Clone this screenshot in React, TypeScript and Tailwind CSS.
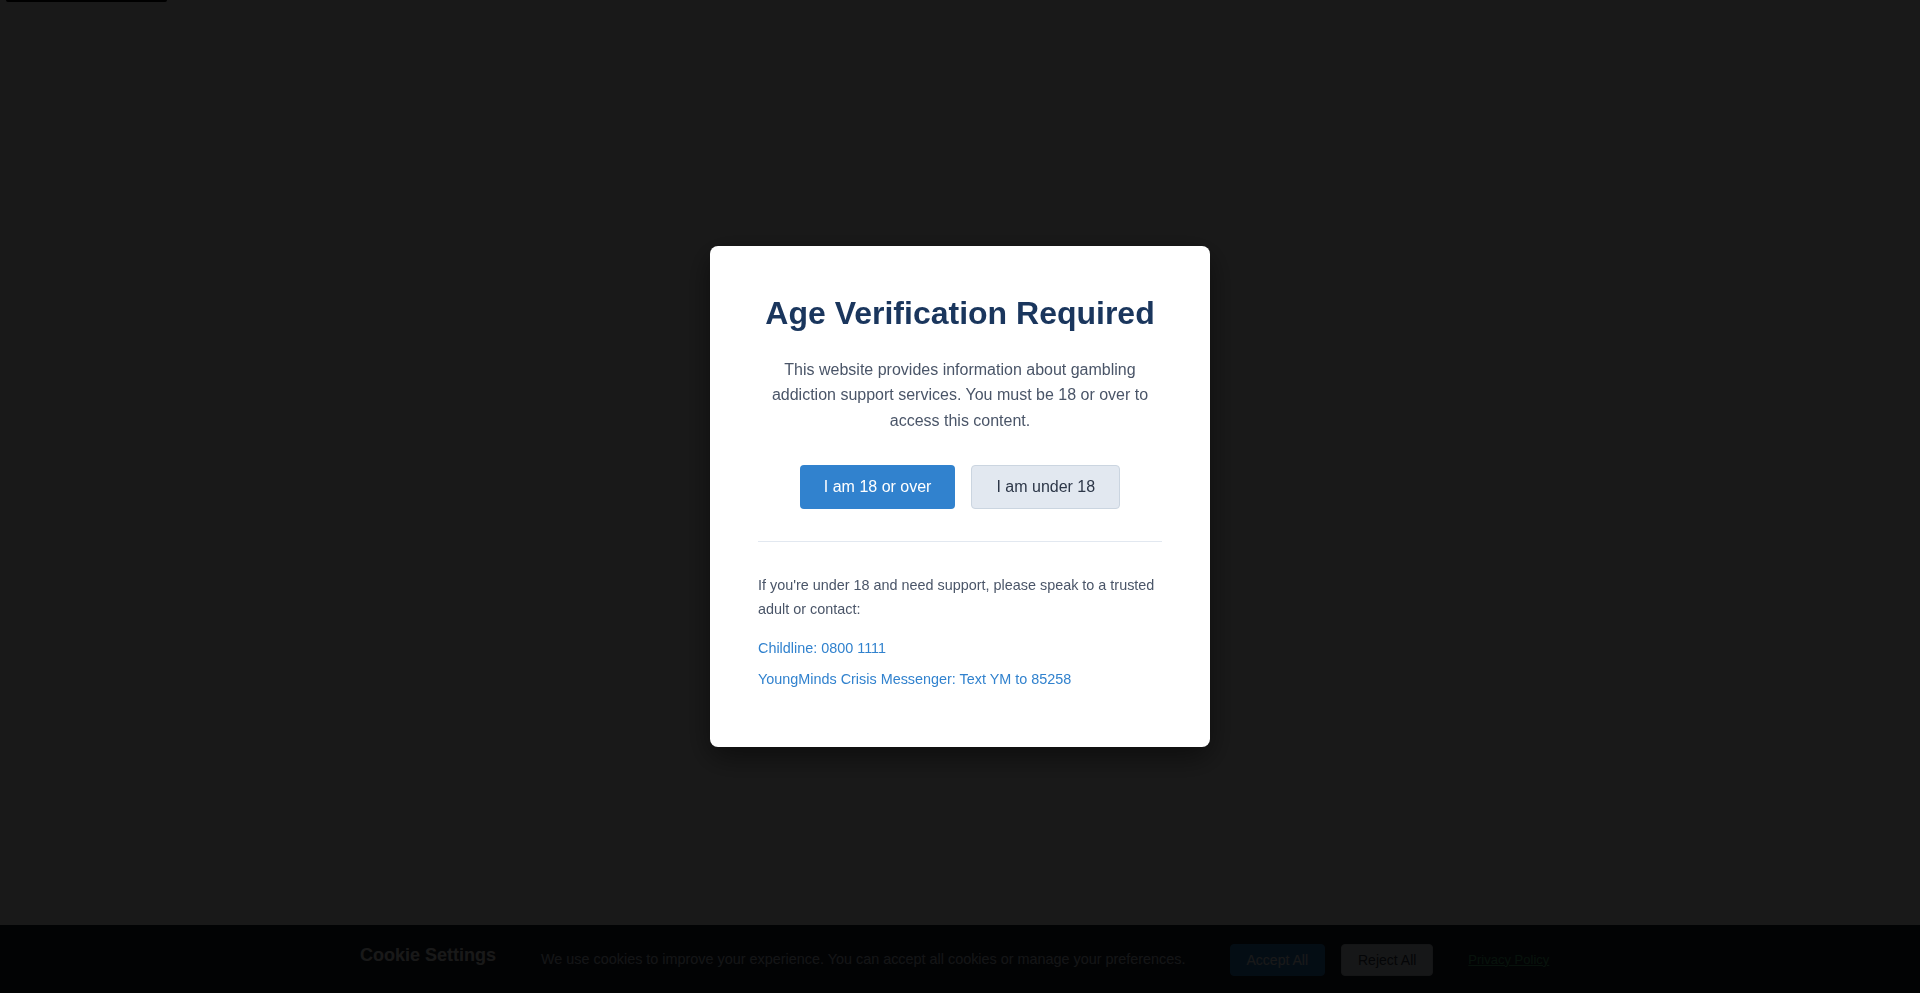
import React from "react";

export default function App() {
  return (
    <div className="relative flex h-[993px] flex-col bg-white font-['Liberation_Sans',Arial,sans-serif]">
      <span className="absolute left-[6px] top-0 z-[60] h-[2px] w-[161px] rounded-b-[3px] bg-black" />
      <main className="flex-1" />
      <div className="border-t border-[#1a202c] bg-[#1a202c] py-[16px]">
        <div className="mx-auto flex max-w-[1200px] items-center">
          <h3 className="mb-2 text-[18px] font-bold leading-normal text-white">Cookie Settings</h3>
          <p className="ml-[45px] text-[14.4px] leading-normal text-[#cbd5e0]">
            We use cookies to improve your experience. You can accept all cookies or manage your preferences.
          </p>
          <div className="ml-[44px] flex items-center">
            <button className="rounded-[4px] border border-[#3182ce] bg-[#3182ce] px-4 py-[7px] text-[14px] leading-4 text-white">
              Accept All
            </button>
            <button className="ml-4 rounded-[4px] border border-[#cbd5e0] bg-[#e2e8f0] px-4 py-[7px] text-[14px] leading-4 text-[#2d3748]">
              Reject All
            </button>
            <a href="#" className="ml-[35px] text-[13px] leading-4 text-[#48bb78] underline">
              Privacy Policy
            </a>
          </div>
        </div>
      </div>

      <div className="fixed inset-0 z-50 flex items-center justify-center bg-black/90">
        <div className="w-[500px] rounded-lg bg-white px-12 pb-12 pt-12 text-center shadow-[0_10px_30px_rgba(0,0,0,0.5)]">
          <h2 className="mb-6 text-[32px] font-bold leading-[1.2] text-[#1a365d]">Age Verification Required</h2>
          <p className="mb-8 text-[16px] leading-[1.6] text-[#4a5568]">
            This website provides information about gambling addiction support services. You must be 18 or over to
            access this content.
          </p>
          <div className="mb-8 flex justify-center gap-4">
            <button className="rounded-[4px] bg-[#3182ce] px-6 py-3 text-[16px] leading-5 text-white">
              I am 18 or over
            </button>
            <button className="rounded-[4px] border border-[#cbd5e0] bg-[#e2e8f0] px-6 py-[11px] text-[16px] leading-5 text-[#2d3748]">
              I am under 18
            </button>
          </div>
          <div className="border-t border-[#e2e8f0] pt-8 text-left">
            <p className="mb-4 text-[14.4px] leading-[1.6] text-[#4a5568]">
              If you're under 18 and need support, please speak to a trusted adult or contact:
            </p>
            <a href="#" className="mb-2 block text-[14.4px] leading-[1.6] text-[#3182ce]">
              Childline: 0800 1111
            </a>
            <a href="#" className="mb-2 block text-[14.4px] leading-[1.6] text-[#3182ce]">
              YoungMinds Crisis Messenger: Text YM to 85258
            </a>
          </div>
        </div>
      </div>
    </div>
  );
}
